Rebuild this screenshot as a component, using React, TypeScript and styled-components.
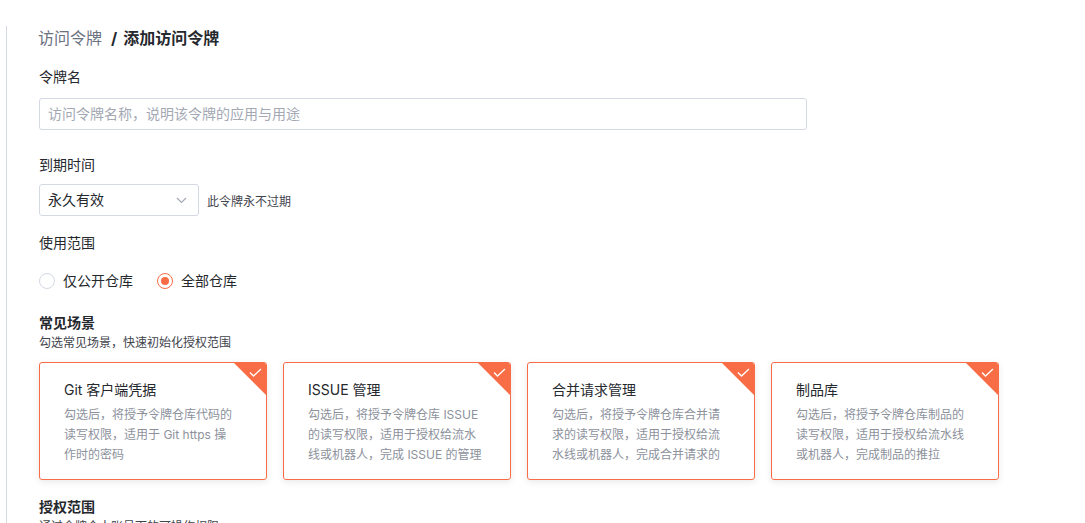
import styled, { createGlobalStyle } from "styled-components";

const GlobalStyle = createGlobalStyle`
    html, body {
        margin: 0;
        height: 100%;
        overflow: hidden;
        background: #fff;
    }
    body {
        font-family: "Inter", "Noto Sans CJK SC", sans-serif;
        color: #25282d;
    }
`;

const Page = styled.div`
    height: 523px;
    overflow: hidden;
    padding: 26px 0 0 6px;
    box-sizing: border-box;
`;

const Content = styled.main`
    height: 600px;
    border-left: 1px solid #d5d9e4;
    padding-left: 32px;
`;

const Breadcrumb = styled.div`
    display: flex;
    align-items: center;
    height: 24px;
    margin-left: -1px;
    font-size: 16px;
    line-height: 24px;
    color: #6b7280;

    .sep {
        margin: 0 6px 0 9px;
        color: #25282d;
        font-weight: 700;
    }

    b {
        color: #25282d;
        font-weight: 700;
    }
`;

const Label = styled.div<{ $top: number }>`
    margin-top: ${(p) => p.$top}px;
    font-size: 14px;
    line-height: 22px;
    color: #25282d;
`;

const NameInput = styled.input`
    display: block;
    box-sizing: border-box;
    width: 768px;
    height: 32px;
    margin-top: 10px;
    padding: 0 8px 2px;
    border: 1px solid #d5d9e4;
    border-radius: 3px;
    outline: none;
    font-family: inherit;
    font-size: 14px;

    &::placeholder {
        color: #a3a8b3;
    }
`;

const ExpireRow = styled.div`
    display: flex;
    align-items: center;
    gap: 8px;
    margin-top: 8px;
    font-size: 12px;
    color: #3f444d;
`;

const Select = styled.div`
    display: flex;
    align-items: center;
    justify-content: space-between;
    box-sizing: border-box;
    width: 160px;
    height: 32px;
    padding: 0 11px 2px 8px;
    border: 1px solid #d5d9e4;
    border-radius: 3px;
    font-size: 14px;
    color: #25282d;

    svg {
        display: block;
        margin-top: 2px;
    }
`;

const RadioRow = styled.div`
    display: flex;
    gap: 24px;
    margin-top: 16px;
`;

const RadioItem = styled.label`
    display: flex;
    align-items: center;
    gap: 8px;
    height: 22px;
    font-size: 14px;
    color: #25282d;
`;

const RadioText = styled.span`
    margin-top: -2px;
`;

const RadioDot = styled.span<{ $checked?: boolean }>`
    display: flex;
    align-items: center;
    justify-content: center;
    box-sizing: border-box;
    width: 16px;
    height: 16px;
    border-radius: 50%;
    border: 1px solid ${(p) => (p.$checked ? "#f96d46" : "#d5d9e4")};

    &::after {
        content: "";
        display: ${(p) => (p.$checked ? "block" : "none")};
        width: 8px;
        height: 8px;
        border-radius: 50%;
        background: #f96d46;
    }
`;

const SectionTitle = styled.div<{ $top: number }>`
    margin-top: ${(p) => p.$top}px;
    font-size: 14px;
    line-height: 22px;
    font-weight: 700;
    color: #25282d;
`;

const SectionHint = styled.div`
    font-size: 12px;
    line-height: 18px;
    color: #3f444d;
`;

const Cards = styled.div`
    display: flex;
    gap: 16px;
    margin-top: 10px;
`;

const Card = styled.div`
    position: relative;
    box-sizing: border-box;
    width: 228px;
    height: 118px;
    padding: 15px 24px 0;
    border: 1px solid #f96d46;
    border-radius: 3px;
    box-shadow: 0 2px 6px rgba(37, 40, 45, 0.1);
    overflow: hidden;
`;

const Corner = styled.svg`
    position: absolute;
    top: 0;
    right: 0;
`;

const CardTitle = styled.div`
    font-size: 14px;
    line-height: 24px;
    margin-bottom: 3px;
    color: #25282d;
`;

const CardLine = styled.div`
    font-size: 12px;
    line-height: 20px;
    white-space: nowrap;
    color: #8c919c;
`;

const scenes = [
    {
        title: "Git 客户端凭据",
        lines: ["勾选后，将授予令牌仓库代码的", "读写权限，适用于 Git https 操", "作时的密码"],
    },
    {
        title: "ISSUE 管理",
        lines: ["勾选后，将授予令牌仓库 ISSUE", "的读写权限，适用于授权给流水", "线或机器人，完成 ISSUE 的管理"],
    },
    {
        title: "合并请求管理",
        lines: ["勾选后，将授予令牌仓库合并请", "求的读写权限，适用于授权给流", "水线或机器人，完成合并请求的"],
    },
    {
        title: "制品库",
        lines: ["勾选后，将授予令牌仓库制品的", "读写权限，适用于授权给流水线", "或机器人，完成制品的推拉"],
    },
];

const App = () => {
    return (
        <Page>
            <GlobalStyle />
            <Content>
                <Breadcrumb>
                    访问令牌<span className="sep">/</span><b>添加访问令牌</b>
                </Breadcrumb>
                <Label $top={16}>令牌名</Label>
                <NameInput placeholder="访问令牌名称，说明该令牌的应用与用途" />
                <Label $top={24}>到期时间</Label>
                <ExpireRow>
                    <Select>
                        永久有效
                        <svg width="11" height="7" viewBox="0 0 11 7" fill="none">
                            <path d="M1 1l4.5 4.5L10 1" stroke="#a3a8b3" strokeWidth="1.2" />
                        </svg>
                    </Select>
                    此令牌永不过期
                </ExpireRow>
                <Label $top={16}>使用范围</Label>
                <RadioRow>
                    <RadioItem><RadioDot /><RadioText>仅公开仓库</RadioText></RadioItem>
                    <RadioItem><RadioDot $checked /><RadioText>全部仓库</RadioText></RadioItem>
                </RadioRow>
                <SectionTitle $top={20}>常见场景</SectionTitle>
                <SectionHint>勾选常见场景，快速初始化授权范围</SectionHint>
                <Cards>
                    {scenes.map((item) => (
                        <Card key={item.title}>
                            <Corner width="32" height="32" viewBox="0 0 32 32">
                                <path d="M0 0h32v32z" fill="#f96d46" />
                                <path d="M16 9.5l3.5 3.5 7.5-7" fill="none" stroke="#fff" strokeWidth="1.3" />
                            </Corner>
                            <CardTitle>{item.title}</CardTitle>
                            {item.lines.map((line) => (
                                <CardLine key={line}>{line}</CardLine>
                            ))}
                        </Card>
                    ))}
                </Cards>
                <SectionTitle $top={16}>授权范围</SectionTitle>
                <SectionHint>通过令牌个人账号下的可操作权限</SectionHint>
            </Content>
        </Page>
    );
};

export default App;
